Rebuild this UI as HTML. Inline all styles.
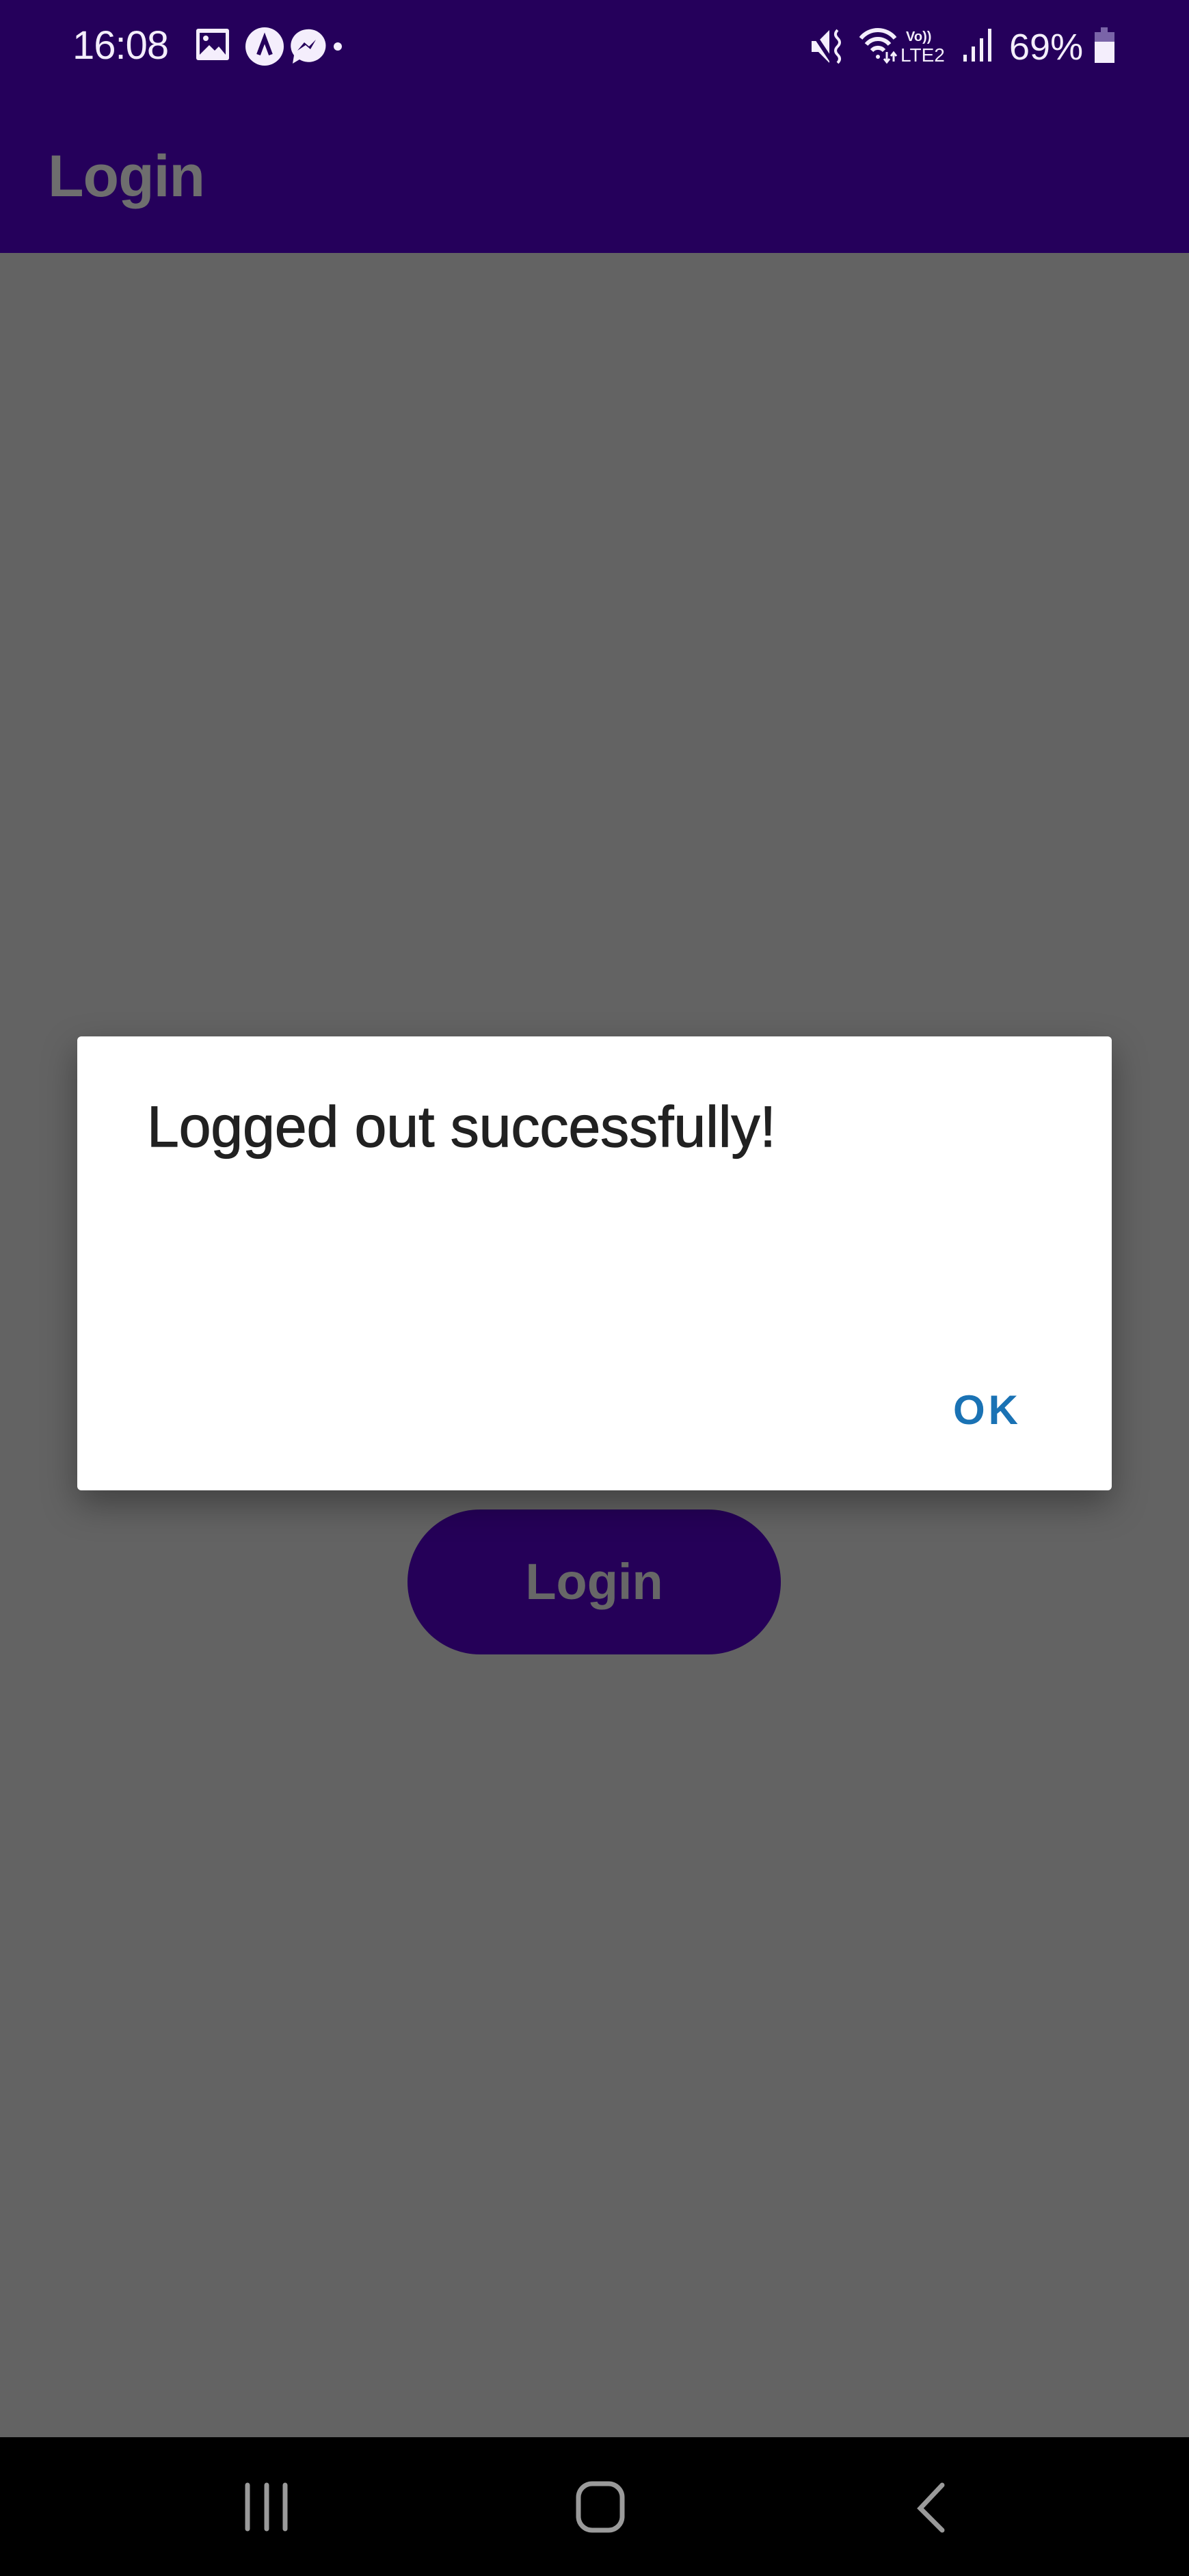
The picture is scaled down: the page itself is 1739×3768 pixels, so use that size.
<!DOCTYPE html>
<html><head><meta charset="utf-8"><style>
*{margin:0;padding:0;box-sizing:border-box}
body{width:1739px;height:3768px;background:#636363;position:relative;overflow:hidden;font-family:"Liberation Sans",sans-serif}
.abs{position:absolute}
</style></head><body>
<div class="abs" style="left:0;top:0;width:1739px;height:370px;background:#25005b"></div>
<div class="abs" style="left:106px;top:32px;font-size:58px;color:#f4eefc;letter-spacing:-1px;line-height:70px">16:08</div>
<svg class="abs" style="left:280px;top:38px" width="230" height="60" viewBox="0 0 230 60">
 <rect x="7" y="4" width="48" height="46" rx="3" fill="#f4eefc"/>
 <rect x="12" y="10" width="38" height="32" fill="#25005b"/>
 <circle cx="21" cy="18" r="4" fill="#f4eefc"/>
 <path d="M12 42 L26 28 L34 36 L40 30 L50 42Z" fill="#f4eefc"/>
 <circle cx="107" cy="30" r="28" fill="#f4eefc"/>
 <path d="M98 42 L107 18 L116 42" stroke="#25005b" stroke-width="6" fill="none"/>
 <path d="M168 5 a25 24 0 1 1 -10 44 l-10 6 l2 -12 a25 24 0 0 1 18 -38z" fill="#f4eefc"/>
 <path d="M155 36 l10 -12 l7 6 l10 -10 l-8 14 l-7 -6z" fill="#25005b"/>
 <circle cx="214" cy="30" r="6" fill="#f4eefc"/>
</svg>
<svg class="abs" style="left:1185px;top:38px" width="290" height="60" viewBox="0 0 290 60">
 <path d="M2 22 h10 l16 -16 v48 l-16 -16 h-10z" fill="#f4eefc"/>
 <path d="M0 4 l32 48" stroke="#25005b" stroke-width="6"/>
 <path d="M40 6 q-6 6 0 12 q6 6 0 12 q-6 6 0 12 q6 6 0 12" stroke="#f4eefc" stroke-width="4" fill="none"/>
 <path d="M74 18 a32 32 0 0 1 50 0 M82 27 a22 22 0 0 1 34 0 M90 36 a12 12 0 0 1 18 0" stroke="#f4eefc" stroke-width="6" fill="none"/>
 <circle cx="99" cy="45" r="3" fill="#f4eefc"/>
 <path d="M112 38 v14 M108 48 l4 5 l4 -5 M122 52 v-12 M118 44 l4 -5 l4 5" stroke="#f4eefc" stroke-width="3" fill="none"/>
 <text x="140" y="22" font-size="20" font-weight="bold" fill="#f4eefc" font-family="Liberation Sans">Vo))</text>
 <text x="132" y="52" font-size="28" fill="#f4eefc" font-family="Liberation Sans">LTE2</text>
 <rect x="224" y="42" width="5" height="10" fill="#f4eefc"/>
 <rect x="236" y="30" width="5" height="22" fill="#f4eefc"/>
 <rect x="248" y="18" width="5" height="34" fill="#f4eefc"/>
 <rect x="260" y="4" width="5" height="48" fill="#f4eefc"/>
</svg>
<div class="abs" style="left:1476px;top:37px;font-size:54px;color:#f4eefc;line-height:64px">69%</div>
<div class="abs" style="left:1610px;top:40px;width:10px;height:8px;background:#7a64a8"></div>
<div class="abs" style="left:1601px;top:47px;width:29px;height:45px;background:#f4eefc;border-top:14px solid #7a64a8"></div>
<div class="abs" style="left:70px;top:203px;font-size:86px;color:#6e6e6e;line-height:110px;font-weight:bold;letter-spacing:-1px">Login</div>

<div class="abs" style="left:596px;top:2208px;width:546px;height:212px;border-radius:106px;background:#250058"></div>
<div class="abs" style="left:596px;top:2208px;width:546px;height:212px;text-align:center;line-height:212px;font-size:74px;font-weight:bold;color:#676767">Login</div>

<div class="abs" style="left:113px;top:1516px;width:1513px;height:664px;background:#fff;border-radius:6px;box-shadow:0 20px 50px rgba(0,0,0,0.35)"></div>
<div class="abs" style="left:215px;top:1598px;font-size:84px;color:#212121;line-height:100px;-webkit-text-stroke:1.2px #212121">Logged out successfully!</div>
<div class="abs" style="left:1394px;top:2024px;font-size:60px;color:#1a72b4;line-height:78px;font-weight:bold;letter-spacing:5px">OK</div>

<div class="abs" style="left:0;top:3565px;width:1739px;height:203px;background:#000"></div>
<svg class="abs" style="left:0;top:3565px" width="1739" height="203">
 <g stroke="#9a9a9a" stroke-width="7" stroke-linecap="round" fill="none">
  <path d="M362 70 v64 M390 70 v64 M417 70 v64"/>
  <rect x="846" y="68" width="64" height="68" rx="20"/>
  <path d="M1378 70 l-32 34 l32 32"/>
 </g>
</svg>
</body></html>
